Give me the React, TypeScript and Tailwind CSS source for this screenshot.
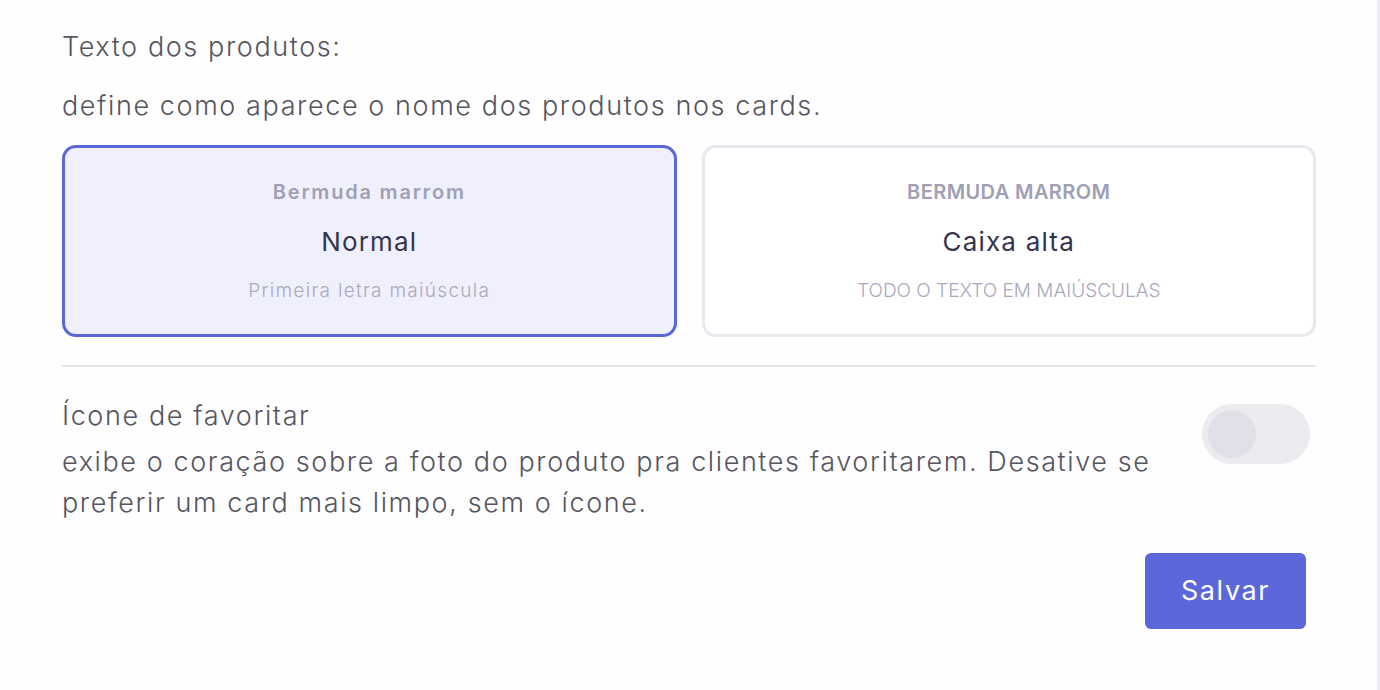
import { useState } from "react";

const FONT = "font-['Inter','Open_Sans',sans-serif]";

type CaseMode = "normal" | "upper";

function CaseCard({
  active,
  sample,
  label,
  hint,
  upper,
  onClick,
}: {
  active: boolean;
  sample: string;
  label: string;
  hint: string;
  upper?: boolean;
  onClick: () => void;
}) {
  return (
    <button
      onClick={onClick}
      className={
        "flex h-[192px] flex-1 flex-col items-center rounded-[14px] border-[3px] pt-[32px] outline-none " +
        (active ? "border-[#5b66d8] bg-[#f0f0fc]" : "border-[#e8e8ef] bg-white")
      }
    >
      <span
        className={
          "text-[20px] font-semibold leading-[24px] text-[#a09fb6] " + (upper ? "tracking-[0.4px]" : "tracking-[1.8px]")
        }
      >
        {sample}
      </span>
      <span className="mt-[24px] text-[26px] font-normal leading-[28px] tracking-[1.2px] text-[#34344d]">{label}</span>
      <span
        className={
          "mt-[23px] text-[19px] font-light leading-[24px] text-[#a9a8bd] " + (upper ? "tracking-[0px]" : "tracking-[1.3px]")
        }
      >
        {hint}
      </span>
    </button>
  );
}

export default function App() {
  const [mode, setMode] = useState<CaseMode>("normal");
  const [fav, setFav] = useState(false);

  return (
    <div className={`${FONT} flex h-[690px] w-[1380px] bg-[#fefefe]`}>
      <div className="flex flex-1 flex-col pl-[62px] pr-[61px] pt-[28px]">
        <p className="text-[27px] font-light leading-[38px] tracking-[1.6px] text-[#55555f]">Texto dos produtos:</p>
        <p className="mt-[21px] text-[27px] font-light leading-[38px] tracking-[1.6px] text-[#55555f]">
          define como aparece o nome dos produtos nos cards.
        </p>

        <div className="mt-[20px] flex gap-[25px]">
          <CaseCard
            active={mode === "normal"}
            sample="Bermuda marrom"
            label="Normal"
            hint="Primeira letra maiúscula"
            onClick={() => setMode("normal")}
          />
          <CaseCard
            active={mode === "upper"}
            upper
            sample="BERMUDA MARROM"
            label="Caixa alta"
            hint="TODO O TEXTO EM MAIÚSCULAS"
            onClick={() => setMode("upper")}
          />
        </div>

        <div className="mt-[28px] h-[2px] bg-[#e6e6e8]" />

        <div className="mt-[30px] flex items-start justify-between">
          <div className="flex w-[1100px] flex-col">
            <p className="text-[27px] font-light leading-[38px] tracking-[1.6px] text-[#55555f]">Ícone de favoritar</p>
            <p className="mt-[6px] text-[27px] font-light leading-[41px] tracking-[1.6px] text-[#55555f]">
              exibe o coração sobre a foto do produto pra clientes favoritarem. Desative se preferir um card mais
              limpo, sem o ícone.
            </p>
          </div>
          <button
            onClick={() => setFav((v) => !v)}
            className={
              "mr-[6px] mt-[7px] flex h-[60px] w-[108px] shrink-0 items-center rounded-full px-[6px] outline-none " +
              (fav ? "justify-end bg-[#5c67d9]" : "justify-start bg-[#ebebf0]")
            }
          >
            <span className={"h-[48px] w-[48px] rounded-full " + (fav ? "bg-white" : "bg-[#dfe0e8]")} />
          </button>
        </div>

        <div className="mt-[30px] flex justify-end pr-[10px]">
          <button className="h-[76px] w-[161px] rounded-[6px] bg-[#5c67d9] text-[27px] font-normal tracking-[1.6px] text-white">
            Salvar
          </button>
        </div>
      </div>
      <div className="w-[3px] bg-[#ececf4]" />
    </div>
  );
}
